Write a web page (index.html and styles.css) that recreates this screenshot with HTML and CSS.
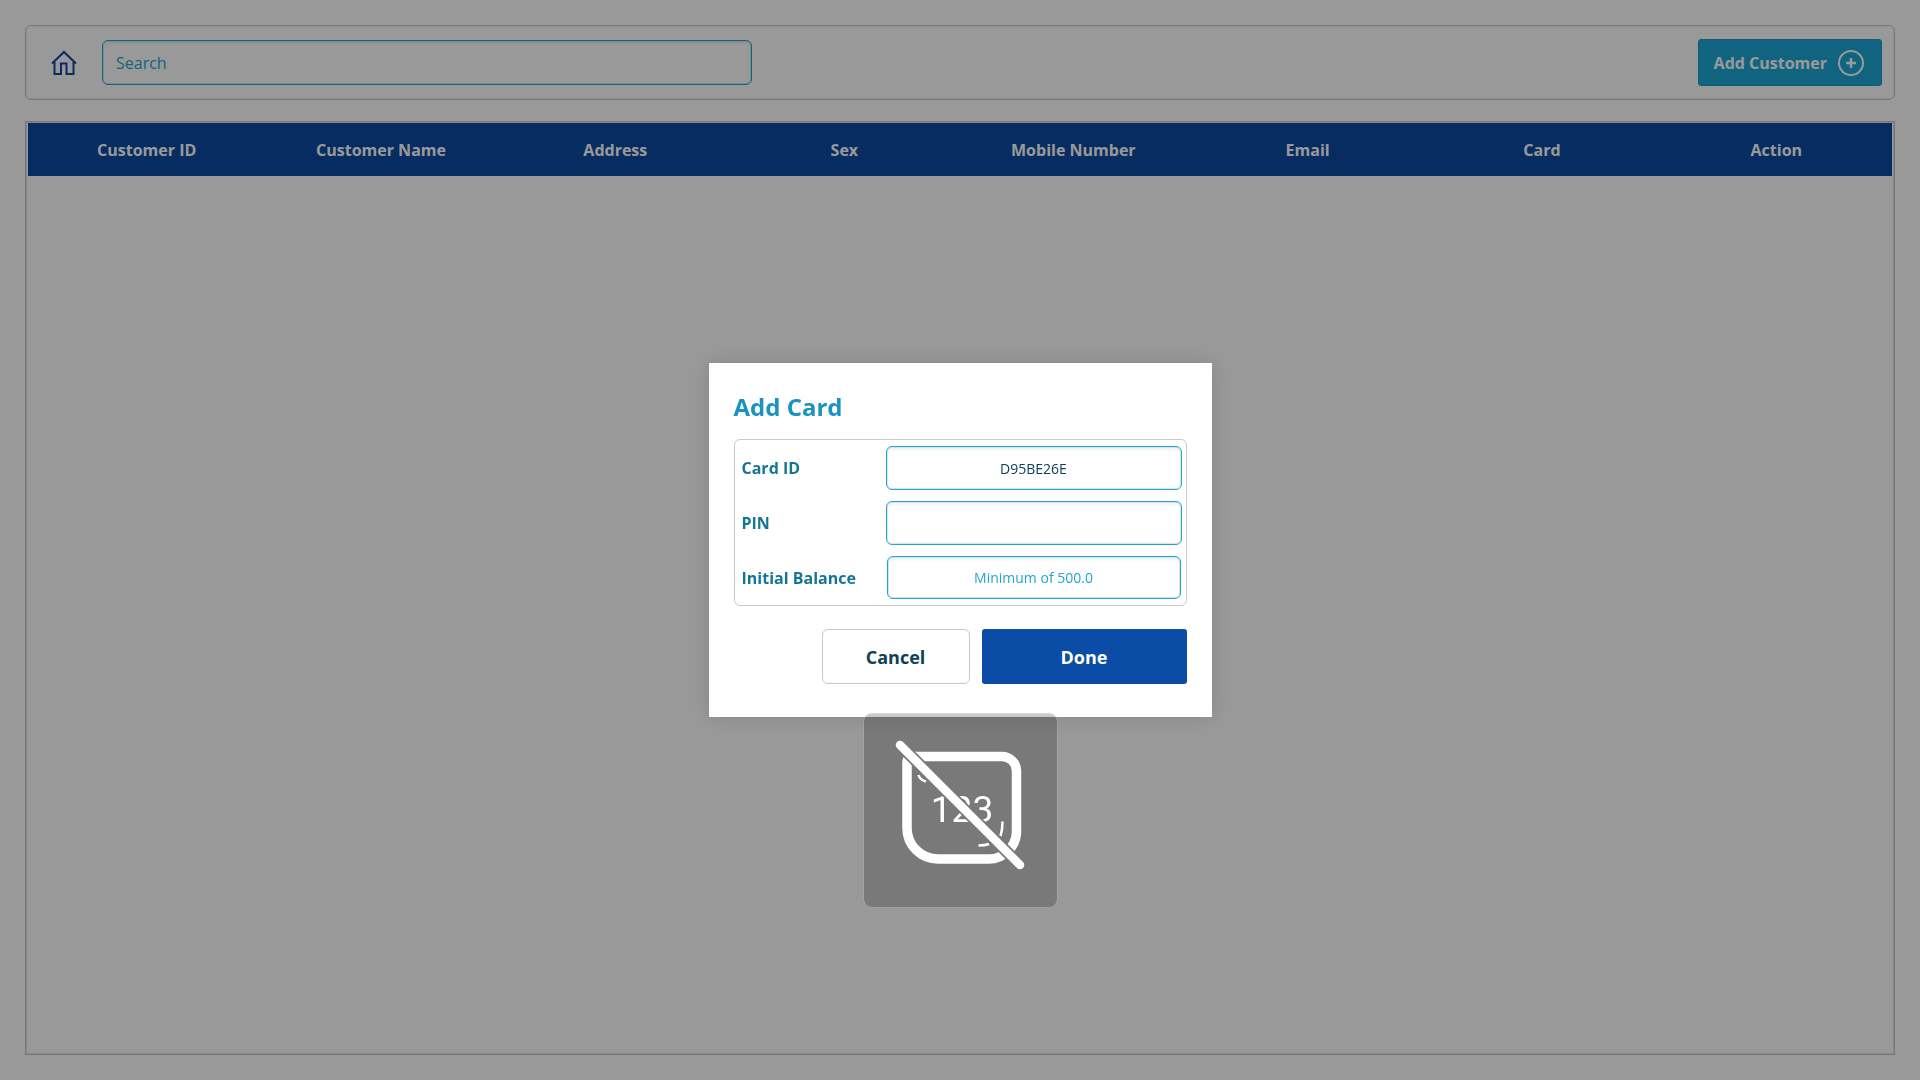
FILE: index.html
```html
<!DOCTYPE html>
<html lang="en">
<head>
<meta charset="utf-8">
<title>Customers</title>
<link rel="stylesheet" href="styles.css">
</head>
<body>
<div class="page">
  <header class="toolbar">
    <a class="home" href="#" aria-label="Home">
      <svg width="26" height="26" viewBox="0 0 26 26" fill="none" stroke="currentColor" stroke-width="2" aria-hidden="true">
        <path d="M1 13.500 13 2l12 11.500M3.500 11.500V24H10V13.500h5.500V24H22.500V11.500"/>
      </svg>
    </a>
    <input class="field search" type="text" placeholder="Search" aria-label="Search">
    <button class="add" type="button">
      <span>Add Customer</span>
      <svg width="28" height="28" viewBox="0 0 28 28" fill="none" stroke="currentColor" stroke-width="2" aria-hidden="true">
        <circle cx="14" cy="14" r="12"/>
        <path d="M14 9v10M9 14h10" stroke-width="2.500"/>
      </svg>
    </button>
  </header>
  <main class="list">
    <table class="customers">
      <thead>
        <tr>
          <th>Customer ID</th>
          <th>Customer Name</th>
          <th>Address</th>
          <th class="narrow">Sex</th>
          <th>Mobile Number</th>
          <th>Email</th>
          <th>Card</th>
          <th>Action</th>
        </tr>
      </thead>
      <tbody></tbody>
    </table>
  </main>
</div>

<div class="overlay">
  <div class="dialog" role="dialog" aria-labelledby="dialog-title">
    <h1 class="title" id="dialog-title">Add Card</h1>
    <form class="form">
      <div class="fields">
        <label for="card-id">Card ID</label>
        <input class="field value" id="card-id" type="text" value="D95BE26E">
        <label for="pin">PIN</label>
        <input class="field value" id="pin" type="password">
        <label for="balance">Initial Balance</label>
        <input class="field value compact" id="balance" type="text" placeholder="Minimum of 500.0">
      </div>
      <div class="actions">
        <button class="btn cancel" type="button">Cancel</button>
        <button class="btn done" type="button">Done</button>
      </div>
    </form>
    <div class="indicator">
      <svg viewBox="0 0 195 195" aria-hidden="true">
        <defs>
          <mask id="cut" maskUnits="userSpaceOnUse" x="0" y="0" width="195" height="195">
            <rect width="195" height="195" fill="#fff"/>
            <path d="M37 32 157 152" stroke="#000" stroke-width="12" stroke-linecap="round"/>
          </mask>
        </defs>
        <g mask="url(#cut)" fill="none" stroke="#fff">
          <path d="M50 43.500H139A14.500 14.500 0 0 1 153.500 58V118A28 28 0 0 1 125.500 146H75A31 31 0 0 1 44 115V50Q44 43.500 50 43.500Z" stroke-width="9.500"/>
          <path d="M55.500 62Q57 67 63 68.500M139.500 108.500Q139.500 117 137.500 123M115.500 132.500Q122 132.500 126 131" stroke-width="2.500"/>
          <text class="digits" x="99" y="109" text-anchor="middle">123</text>
        </g>
        <path d="M37 32 157 152" stroke="#fff" stroke-width="8.500" stroke-linecap="round"/>
      </svg>
    </div>
  </div>
</div>
</body>
</html>
```
FILE: styles.css
```css
* {
  box-sizing: border-box;
}

body {
  margin: 0;
  background: #fff;
  font-family: "Open Sans", "Noto Sans", sans-serif;
  font-size: 16px;
}

button,
input {
  font: inherit;
  margin: 0;
}

.page {
  min-height: 100vh;
  padding: 25px;
  display: flex;
  flex-direction: column;
  gap: 21px;
}

.toolbar {
  height: 75px;
  padding: 0 12px 0 25px;
  display: flex;
  align-items: center;
  border: 1px solid #c8c8c8;
  border-radius: 6px;
  box-shadow: inset 0 0 0 1px #f2f2f2;
}

.home {
  display: flex;
  margin-right: 25px;
  color: #0a4ca6;
}

.field {
  height: 44px;
  padding: 0 13px;
  border: 1px solid #22a5d3;
  border-radius: 6px;
  background: #fff;
  box-shadow: inset 0 0 0 1px #d3e6ed, inset 0 3px 3px #f2f2f2;
  color: #0d4156;
  outline: none;
}

.field::placeholder {
  color: #22a5d3;
  opacity: 1;
}

.search {
  width: 35.5%;
  height: 45px;
}

.add {
  height: 47px;
  margin-left: auto;
  padding: 0 16px 0 15px;
  display: flex;
  align-items: center;
  gap: 10px;
  border: 1px solid #1a9bc4;
  border-radius: 3px;
  background: #1ca7d4;
  color: #fff;
  font-weight: 700;
}

.list {
  flex: 1;
  padding: 1px;
  border: 1px solid #c8c8c8;
  box-shadow: inset 0 0 0 1px #e2e2e2;
}

.customers {
  width: calc(100% - 2px);
  margin: 0 1px;
  border-collapse: collapse;
  table-layout: fixed;
}

.customers th {
  height: 53px;
  padding: 0 0 0 3px;
  background: #0a4aa2;
  color: #fff;
  font-weight: 700;
  text-align: center;
}

.customers .narrow {
  width: 12%;
}

.overlay {
  position: fixed;
  inset: 0;
  display: flex;
  align-items: center;
  justify-content: center;
  background: rgba(0, 0, 0, 0.4);
}

.dialog {
  position: relative;
  width: 503px;
  padding: 25px 25px 33px;
  background: #fff;
  box-shadow: 0 0 20px rgba(0, 0, 0, 0.14);
}

.title {
  margin: 0 0 14px;
  color: #1893c2;
  font-size: 24px;
  font-weight: 700;
  line-height: 37px;
}

.fields {
  display: grid;
  grid-template-columns: 1fr 296px;
  row-gap: 11px;
  align-items: center;
  padding: 6px 4px 6px 7px;
  border: 1px solid #c8c8c8;
  border-radius: 6px;
  color: #147596;
}

.fields label {
  font-weight: 700;
}

.value {
  width: 100%;
  font-size: 14px;
  text-align: center;
}

.compact {
  width: 294px;
  height: 43px;
  justify-self: center;
}

.actions {
  display: flex;
  justify-content: flex-end;
  gap: 12px;
  margin-top: 23px;
}

.btn {
  height: 55px;
  border-radius: 6px;
  font-size: 18px;
  font-weight: 700;
}

.cancel {
  width: 148px;
  border: 1px solid #c8c8c8;
  background: #fff;
  color: #0d4156;
}

.done {
  width: 205px;
  border: 0;
  border-radius: 3px;
  background: #0a4ca6;
  color: #fff;
}

.indicator {
  position: absolute;
  top: calc(100% - 4px);
  left: 50%;
  width: 195px;
  height: 195px;
  margin-left: -97px;
  border-radius: 9px;
  background: rgba(0, 0, 0, 0.21);
  box-shadow: inset 0 0 0 1px rgba(255, 255, 255, 0.3);
}

.indicator svg {
  display: block;
  width: 100%;
  height: 100%;
}

.digits {
  fill: #fff;
  stroke: none;
  font-family: Roboto, sans-serif;
  font-size: 37px;
  font-weight: 400;
}
```
